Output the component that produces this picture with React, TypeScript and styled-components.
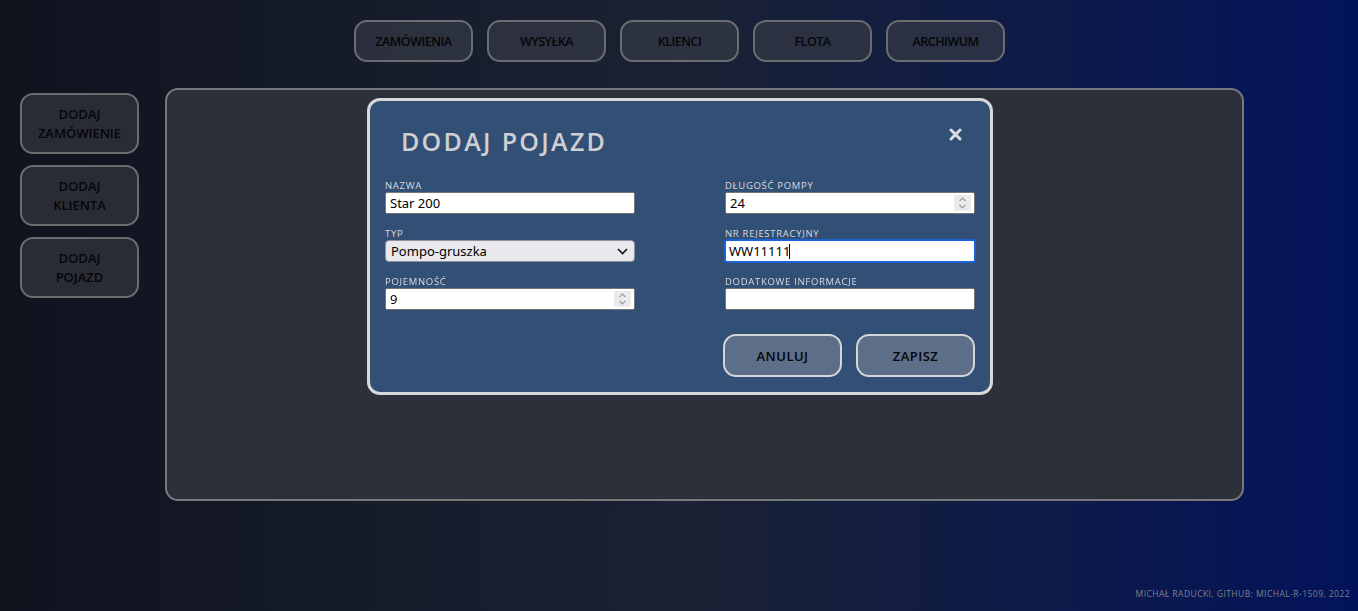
import React, { useEffect, useRef } from "react";
import styled, { createGlobalStyle } from "styled-components";

const Global = createGlobalStyle`
  html, body { margin: 0; padding: 0; }
  body { font-family: "Open Sans", "Noto Sans", sans-serif; }
  * { box-sizing: border-box; }
`;

const Page = styled.div`
  position: relative;
  min-height: 611px;
  display: flex;
  flex-direction: column;
  background: linear-gradient(90deg, #10131e 0%, #1a2233 50%, #03135b 100%);
`;

const Nav = styled.nav`
  display: flex;
  justify-content: center;
  gap: 14px;
  padding: 20px 0 0 1px;
`;

const NavButton = styled.button`
  width: 119px;
  height: 42px;
  border: 2px solid #6b6c70;
  border-radius: 13px;
  background: rgba(52, 56, 70, 0.75);
  color: #050507;
  font-family: "Open Sans", sans-serif;
  font-size: 12.5px;
  font-weight: 600;
  letter-spacing: -0.5px;
  text-transform: uppercase;
  cursor: pointer;
`;

const Content = styled.div`
  display: flex;
  align-items: flex-start;
  gap: 26px;
  padding: 26px 20px 0 20px;
`;

const Side = styled.aside`
  display: flex;
  flex-direction: column;
  gap: 11px;
  margin-top: 5px;
`;

const SideButton = styled.button`
  width: 119px;
  height: 61px;
  border: 2px solid #6b6c70;
  border-radius: 13px;
  background: rgba(48, 50, 60, 0.8);
  color: #050507;
  font-family: "Open Sans", sans-serif;
  font-size: 13px;
  font-weight: 600;
  line-height: 19px;
  letter-spacing: 0px;
  text-transform: uppercase;
  padding: 0;
`;

const Panel = styled.main`
  position: relative;
  width: 1079px;
  height: 413px;
  border: 2px solid #77787c;
  border-radius: 13px;
  background: #2c303b;
`;

const Modal = styled.section`
  position: absolute;
  left: 200px;
  top: 8px;
  width: 626px;
  border: 3px solid #d7d8da;
  border-radius: 13px;
  background: #324f75;
  padding: 0 15px 15px 15px;
`;

const Header = styled.header`
  display: flex;
  justify-content: space-between;
  align-items: center;
  height: 79px;
  padding: 0 11px 4px 16px;
`;

const Title = styled.h2`
  margin: 4px 0 0 0;
  color: #cfd0d2;
  font-family: "Open Sans", sans-serif;
  font-size: 25px;
  font-weight: 600;
  letter-spacing: 2.3px;
`;

const Close = styled.button`
  border: none;
  background: none;
  padding: 0;
  margin-top: -8px;
  margin-right: 2px;
  color: #dcdde0;
  display: flex;
  cursor: pointer;
`;

const Grid = styled.div`
  display: grid;
  grid-template-columns: 250px 250px;
  justify-content: space-between;
  row-gap: 14px;
`;

const Field = styled.div`
  display: flex;
  flex-direction: column;
`;

const Label = styled.label`
  height: 12px;
  line-height: 12px;
  color: #d9dadd;
  font-family: "Open Sans", sans-serif;
  font-size: 9.5px;
  font-weight: 500;
  letter-spacing: 0.7px;
  text-transform: uppercase;
`;

const Box = styled.div<{ $focused?: boolean }>`
  display: flex;
  align-items: stretch;
  height: 22px;
  background: #fff;
  border: 1px solid #767676;
  border-radius: 2px;
  ${(p) =>
    p.$focused &&
    `
    border: 2px solid #1b63d6;
    border-radius: 3px;
    margin: -1px;
    height: 24px;
  `}
`;

const Input = styled.input`
  flex: 1;
  min-width: 0;
  border: none;
  outline: none;
  background: transparent;
  padding: 0 4px;
  font-family: "Noto Sans", "Open Sans", sans-serif;
  font-size: 13px;
  color: #000;
  caret-color: transparent;
`;

const FocusInput = styled(Input)`
  flex: 0 0 auto;
  width: 64px;
  padding: 0 0 0 3px;
`;

const Caret = styled.span`
  align-self: center;
  width: 1px;
  height: 15px;
  margin-left: -1px;
  background: #000;
`;

const Spinner = styled.div`
  width: 17px;
  margin: 2px 3px 2px 0;
  background: #ebebee;
  display: flex;
  align-items: center;
  justify-content: center;
  color: #9a9aa2;
`;

const SelectBox = styled.div`
  display: flex;
  align-items: center;
  height: 22px;
  background: #e9e9ed;
  border: 1px solid #8f8f9d;
  border-radius: 4px;
  padding: 0 6px 0 5px;
  color: #111;
`;

const Select = styled.select`
  flex: 1;
  appearance: none;
  border: none;
  outline: none;
  background: transparent;
  padding: 0;
  font-family: "Noto Sans", "Open Sans", sans-serif;
  font-size: 13px;
  color: #000;
`;

const Actions = styled.div`
  display: flex;
  justify-content: flex-end;
  gap: 14px;
  margin-top: 24px;
`;

const ActionButton = styled.button`
  width: 119px;
  height: 43px;
  border: 2px solid #d4d5d8;
  border-radius: 13px;
  background: #5d6e88;
  color: #050507;
  font-family: "Open Sans", sans-serif;
  font-size: 13px;
  font-weight: 600;
  text-transform: uppercase;
  letter-spacing: 0.5px;
`;

const Footer = styled.footer`
  margin-top: auto;
  padding: 0 8px 12px 0;
  text-align: right;
  color: #7f8190;
  font-family: "Open Sans", sans-serif;
  font-size: 8.5px;
  font-weight: 500;
  letter-spacing: 0.45px;
  text-transform: uppercase;
`;

const SpinIcon = () => (
  <svg width="9" height="14" viewBox="0 0 9 14" fill="none" stroke="currentColor" strokeWidth="1.1">
    <path d="M1.5 5 L4.5 2 L7.5 5" />
    <path d="M1.5 9 L4.5 12 L7.5 9" />
  </svg>
);

const Chevron = () => (
  <svg width="11" height="7" viewBox="0 0 11 7" fill="none" stroke="#111" strokeWidth="1.6">
    <path d="M1 1 L5.5 5.5 L10 1" />
  </svg>
);

const CloseIcon = () => (
  <svg width="13" height="13" viewBox="0 0 13 13" stroke="currentColor" strokeWidth="3" strokeLinecap="round">
    <path d="M2 2 L11 11 M11 2 L2 11" />
  </svg>
);

export default function App() {
  const regRef = useRef<HTMLInputElement>(null);
  useEffect(() => {
    const el = regRef.current;
    if (el) {
      el.focus();
      el.setSelectionRange(0, 0);
      el.scrollLeft = 0;
    }
  }, []);

  return (
    <Page>
      <Global />
      <Nav>
        {["Zamówienia", "Wysyłka", "Klienci", "Flota", "Archiwum"].map((t) => (
          <NavButton key={t}>{t}</NavButton>
        ))}
      </Nav>
      <Content>
        <Side>
          <SideButton>
            Dodaj
            <br />
            zamówienie
          </SideButton>
          <SideButton>
            Dodaj
            <br />
            klienta
          </SideButton>
          <SideButton>
            Dodaj
            <br />
            pojazd
          </SideButton>
        </Side>
        <Panel>
          <Modal>
            <Header>
              <Title>DODAJ POJAZD</Title>
              <Close aria-label="Zamknij">
                <CloseIcon />
              </Close>
            </Header>
            <Grid>
              <Field>
                <Label>Nazwa</Label>
                <Box>
                  <Input defaultValue="Star 200" />
                </Box>
              </Field>
              <Field>
                <Label>Długość pompy</Label>
                <Box>
                  <Input defaultValue="24" />
                  <Spinner>
                    <SpinIcon />
                  </Spinner>
                </Box>
              </Field>
              <Field>
                <Label>Typ</Label>
                <SelectBox>
                  <Select defaultValue="Pompo-gruszka">
                    <option>Pompo-gruszka</option>
                    <option>Gruszka</option>
                    <option>Pompa</option>
                  </Select>
                  <Chevron />
                </SelectBox>
              </Field>
              <Field>
                <Label>Nr rejestracyjny</Label>
                <Box $focused>
                  <FocusInput ref={regRef} defaultValue="WW11111" />
                  <Caret />
                </Box>
              </Field>
              <Field>
                <Label>Pojemność</Label>
                <Box>
                  <Input defaultValue="9" />
                  <Spinner>
                    <SpinIcon />
                  </Spinner>
                </Box>
              </Field>
              <Field>
                <Label>Dodatkowe informacje</Label>
                <Box>
                  <Input defaultValue="" />
                </Box>
              </Field>
            </Grid>
            <Actions>
              <ActionButton>Anuluj</ActionButton>
              <ActionButton>Zapisz</ActionButton>
            </Actions>
          </Modal>
        </Panel>
      </Content>
      <Footer>Michał Raducki, github: michal-r-1509, 2022</Footer>
    </Page>
  );
}
